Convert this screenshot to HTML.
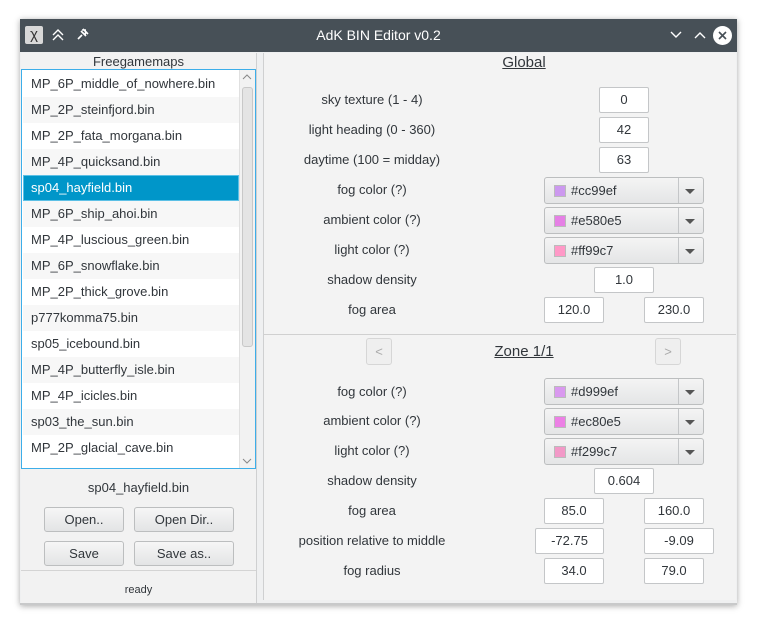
<!DOCTYPE html>
<html><head><style>
*{margin:0;padding:0;box-sizing:border-box}
body{width:757px;height:624px;background:#fff;font-family:"Liberation Sans",sans-serif;font-size:13px;color:#31363b;position:relative;overflow:hidden}
.a{position:absolute}
.win{left:20px;top:19px;width:717px;height:586px;background:#eff0f1;box-shadow:0 1px 6px rgba(0,0,0,.35)}
.tb{left:20px;top:19px;width:717px;height:33px;background:#475057}
.lbl{position:absolute;width:220px;text-align:center;left:262px}
.tf{position:absolute;height:26px;background:#fff;border:1px solid #c4c6c8;border-radius:2px;text-align:center;line-height:24px}
.cb{position:absolute;left:544px;width:160px;height:27px;border:1px solid #bcbebf;border-radius:3px;background:linear-gradient(#f4f4f4,#e4e5e6)}
.cb .sw{position:absolute;left:9px;top:7px;width:12px;height:12px;border:1px solid #bbb}
.cb .t{position:absolute;left:26px;top:5px}
.cb .d{position:absolute;left:133px;top:0;width:1px;height:25px;background:#c4c6c8}
.cb .ar{position:absolute;left:140px;top:11px;border-left:5px solid transparent;border-right:5px solid transparent;border-top:5px solid #555}
.btn{position:absolute;height:25px;border:1px solid #bcbebf;border-radius:3px;background:linear-gradient(#f6f6f6,#e3e4e5);text-align:center;line-height:23px}
.it{position:absolute;left:23px;width:216px;height:26px;line-height:26px;padding-left:8px;font-size:13px}
</style></head><body>
<div class="a win"></div>
<div class="a tb"></div>
<div class="a" style="left:25px;top:26px;width:18px;height:18px;background:#d8d8d8;border-radius:2px;font-size:15px;line-height:18px;text-align:center;color:#333">&#967;</div>
<svg class="a" style="left:50px;top:27px" width="16" height="16"><path d="M3 8l5-5 5 5M3 13l5-5 5 5" stroke="#fff" stroke-width="1.4" fill="none"/></svg>
<svg class="a" style="left:76px;top:27px" width="14" height="14"><path d="M2 12l4-4M5 4l5 5M7 2l5 5M6 3l4 0M10 4l-1 4" stroke="#fff" stroke-width="1.6" fill="none"/></svg>
<div class="a" style="left:20px;top:27px;width:717px;text-align:center;color:#fff;font-size:14px">AdK BIN Editor v0.2</div>
<svg class="a" style="left:668px;top:28px" width="16" height="14"><path d="M3 4l5 5 5-5" stroke="#fff" stroke-width="1.4" fill="none"/></svg>
<svg class="a" style="left:692px;top:28px" width="16" height="14"><path d="M3 10l5-5 5 5" stroke="#fff" stroke-width="1.4" fill="none"/></svg>
<div class="a" style="left:713px;top:26px;width:19px;height:19px;border-radius:50%;background:#fff"></div>
<svg class="a" style="left:713px;top:26px" width="19" height="19"><path d="M6 6l7 7M13 6l-7 7" stroke="#475057" stroke-width="1.6"/></svg>

<!-- left panel -->
<div class="a" style="left:21px;top:53px;width:235px;height:551px;background:#f2f2f2"></div>
<div class="a" style="left:21px;top:54px;width:235px;text-align:center">Freegamemaps</div>
<div class="a" style="left:21px;top:69px;width:235px;height:400px;border:1px solid #3daee9;background:#fff"></div>
<div class="it" style="top:71px;background:#fff">MP_6P_middle_of_nowhere.bin</div>
<div class="it" style="top:97px;background:#f7f7f7">MP_2P_steinfjord.bin</div>
<div class="it" style="top:123px;background:#fff">MP_2P_fata_morgana.bin</div>
<div class="it" style="top:149px;background:#f7f7f7">MP_4P_quicksand.bin</div>
<div class="it" style="top:175px;background:#0096c9;color:#fff;border:1px solid #5cc0e6;padding-left:7px;line-height:24px">sp04_hayfield.bin</div>
<div class="it" style="top:201px;background:#f7f7f7">MP_6P_ship_ahoi.bin</div>
<div class="it" style="top:227px;background:#fff">MP_4P_luscious_green.bin</div>
<div class="it" style="top:253px;background:#f7f7f7">MP_6P_snowflake.bin</div>
<div class="it" style="top:279px;background:#fff">MP_2P_thick_grove.bin</div>
<div class="it" style="top:305px;background:#f7f7f7">p777komma75.bin</div>
<div class="it" style="top:331px;background:#fff">sp05_icebound.bin</div>
<div class="it" style="top:357px;background:#f7f7f7">MP_4P_butterfly_isle.bin</div>
<div class="it" style="top:383px;background:#fff">MP_4P_icicles.bin</div>
<div class="it" style="top:409px;background:#f7f7f7">sp03_the_sun.bin</div>
<div class="it" style="top:435px;background:#fff">MP_2P_glacial_cave.bin</div>
<div class="a" style="left:239px;top:70px;width:16px;height:398px;background:#f2f2f2;border-left:1px solid #e0e0e0"></div>
<div class="a" style="left:242px;top:87px;width:11px;height:260px;background:#e4e4e4;border:1px solid #c8c8c8;border-radius:3px"></div>
<svg class="a" style="left:242px;top:73px" width="10" height="8"><path d="M1 6l4-4 4 4" stroke="#888" fill="none"/></svg>
<svg class="a" style="left:242px;top:457px" width="10" height="8"><path d="M1 2l4 4 4-4" stroke="#888" fill="none"/></svg>
<div class="a" style="left:21px;top:480px;width:235px;text-align:center">sp04_hayfield.bin</div>
<div class="btn" style="left:44px;top:507px;width:80px">Open..</div>
<div class="btn" style="left:134px;top:507px;width:100px">Open Dir..</div>
<div class="btn" style="left:44px;top:541px;width:80px">Save</div>
<div class="btn" style="left:134px;top:541px;width:100px">Save as..</div>
<div class="a" style="left:21px;top:570px;width:235px;height:1px;background:#d4d4d4"></div>
<div class="a" style="left:21px;top:584px;width:235px;text-align:center;font-size:11px">ready</div>

<div class="a" style="left:256px;top:53px;width:1px;height:551px;background:#cfd0d1"></div>
<div class="a" style="left:263px;top:53px;width:1px;height:547px;background:#cfd0d1"></div>
<div class="a" style="left:264px;top:53px;width:472px;height:547px;background:#f3f3f3"></div>
<div class="a" style="left:20px;top:603px;width:717px;height:2px;background:#c8c9ca"></div>

<!-- global -->
<div class="a" style="left:264px;top:54px;width:520px;text-align:center;font-size:15px;text-decoration:underline">Global</div>
<div class="lbl" style="top:92px">sky texture (1 - 4)</div>
<div class="tf" style="left:599px;top:87px;width:50px">0</div>
<div class="lbl" style="top:122px">light heading (0 - 360)</div>
<div class="tf" style="left:599px;top:117px;width:50px">42</div>
<div class="lbl" style="top:152px">daytime (100 = midday)</div>
<div class="tf" style="left:599px;top:147px;width:50px">63</div>
<div class="lbl" style="top:182px">fog color (?)</div>
<div class="cb" style="top:177px"><div class="sw" style="background:#cc99ef"></div><div class="t">#cc99ef</div><div class="d"></div><div class="ar"></div></div>
<div class="lbl" style="top:212px">ambient color (?)</div>
<div class="cb" style="top:207px"><div class="sw" style="background:#e580e5"></div><div class="t">#e580e5</div><div class="d"></div><div class="ar"></div></div>
<div class="lbl" style="top:242px">light color (?)</div>
<div class="cb" style="top:237px"><div class="sw" style="background:#ff99c7"></div><div class="t">#ff99c7</div><div class="d"></div><div class="ar"></div></div>
<div class="lbl" style="top:272px">shadow density</div>
<div class="tf" style="left:594px;top:267px;width:60px">1.0</div>
<div class="lbl" style="top:302px">fog area</div>
<div class="tf" style="left:544px;top:297px;width:60px">120.0</div>
<div class="tf" style="left:644px;top:297px;width:60px">230.0</div>
<div class="a" style="left:264px;top:334px;width:472px;height:1px;background:#d0d0d0"></div>

<!-- zone -->
<div class="btn" style="left:366px;top:338px;width:26px;height:27px;color:#aaa;line-height:25px;background:#efefef;border-color:#d6d6d6">&lt;</div>
<div class="btn" style="left:655px;top:338px;width:26px;height:27px;color:#aaa;line-height:25px;background:#efefef;border-color:#d6d6d6">&gt;</div>
<div class="a" style="left:264px;top:343px;width:520px;text-align:center;font-size:15px;text-decoration:underline">Zone 1/1</div>
<div class="lbl" style="top:384px">fog color (?)</div>
<div class="cb" style="top:378px"><div class="sw" style="background:#d999ef"></div><div class="t">#d999ef</div><div class="d"></div><div class="ar"></div></div>
<div class="lbl" style="top:413px">ambient color (?)</div>
<div class="cb" style="top:408px"><div class="sw" style="background:#ec80e5"></div><div class="t">#ec80e5</div><div class="d"></div><div class="ar"></div></div>
<div class="lbl" style="top:443px">light color (?)</div>
<div class="cb" style="top:438px"><div class="sw" style="background:#f299c7"></div><div class="t">#f299c7</div><div class="d"></div><div class="ar"></div></div>
<div class="lbl" style="top:473px">shadow density</div>
<div class="tf" style="left:594px;top:468px;width:60px">0.604</div>
<div class="lbl" style="top:503px">fog area</div>
<div class="tf" style="left:544px;top:498px;width:60px">85.0</div>
<div class="tf" style="left:644px;top:498px;width:60px">160.0</div>
<div class="lbl" style="top:533px">position relative to middle</div>
<div class="tf" style="left:535px;top:528px;width:69px">-72.75</div>
<div class="tf" style="left:644px;top:528px;width:70px">-9.09</div>
<div class="lbl" style="top:563px">fog radius</div>
<div class="tf" style="left:544px;top:558px;width:60px">34.0</div>
<div class="tf" style="left:644px;top:558px;width:60px">79.0</div>
</body></html>
